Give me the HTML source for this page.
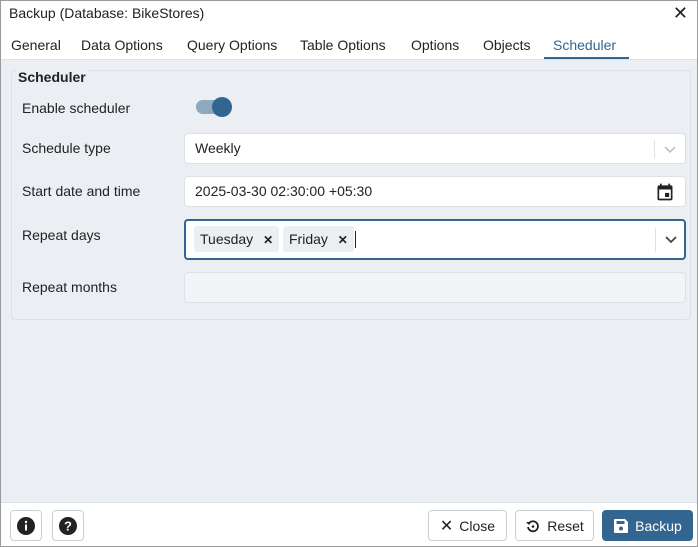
<!DOCTYPE html>
<html><head><style>
*{box-sizing:border-box;margin:0;padding:0}
body{width:698px;height:547px;font-family:"Liberation Sans",sans-serif;font-size:14px;color:#222;background:#fff;position:relative;overflow:hidden}
.frame{position:absolute;inset:0;border:1px solid #9a9a9a}
.abs{position:absolute}
.title{left:9px;top:5px;font-size:14px;color:#222}
.tabs{left:1px;top:29px;width:696px;height:31px;background:#fff;border-bottom:1px solid #dde0e6}
.tab{position:absolute;top:8px;font-size:14px;color:#222}
.content{left:1px;top:60px;width:696px;height:442px;background:#ebeef3}
.fs{left:11px;top:70px;width:680px;height:250px;border:1px solid #dde1e7;border-radius:4px}
.lbl{position:absolute;left:22px;font-size:14px;color:#222}
.inp{position:absolute;left:184px;width:502px;background:#fff;border:1px solid #dde1e7;border-radius:4px}
.foot{left:1px;top:502px;width:696px;height:44px;background:#fff;border-top:1px solid #dde0e6}
.btn{position:absolute;top:510px;height:31px;border:1px solid #ccd0d6;border-radius:4px;background:#fff;font-size:14px;display:flex;align-items:center;justify-content:center;gap:6px;color:#222}
.chip{position:absolute;top:5px;height:26px;background:#ebeef3;border-radius:3px;font-size:14px;padding:5px 6px;color:#222}
</style></head><body>
<div class="abs title">Backup (Database: BikeStores)</div>
<div class="abs" style="right:10px;top:3px;font-size:18px">✕</div>
<div class="abs tabs">
<span class="tab" style="left:10px">General</span>
<span class="tab" style="left:80px">Data Options</span>
<span class="tab" style="left:186px">Query Options</span>
<span class="tab" style="left:299px">Table Options</span>
<span class="tab" style="left:410px">Options</span>
<span class="tab" style="left:482px">Objects</span>
<span class="tab" style="left:552px;color:#326690">Scheduler</span>
<div class="abs" style="left:543px;top:28px;width:85px;height:2px;background:#326690"></div>
</div>
<div class="abs content"></div>
<div class="abs fs"></div>
<div class="abs" style="left:16px;top:69px;font-weight:bold;font-size:14px;background:#ebeef3;padding:0 2px">Scheduler</div>
<div class="lbl" style="top:100px">Enable scheduler</div>
<div class="abs" style="left:196px;top:100px;width:34px;height:14px;border-radius:7px;background:#8da8bf"></div>
<div class="abs" style="left:212px;top:97px;width:20px;height:20px;border-radius:50%;background:#326690"></div>
<div class="lbl" style="top:140px">Schedule type</div>
<div class="inp" style="top:133px;height:31px"><span class="abs" style="left:10px;top:6px">Weekly</span>
<div class="abs" style="right:30px;top:6px;width:1px;height:18px;background:#dde1e7"></div>
<svg class="abs" style="right:8px;top:10px" width="14" height="10"><path d="M2 3l5 5 5-5" stroke="#bbb" fill="none" stroke-width="1.5"/></svg></div>
<div class="lbl" style="top:183px">Start date and time</div>
<div class="inp" style="top:176px;height:31px"><span class="abs" style="left:10px;top:6px">2025-03-30 02:30:00 +05:30</span>
<svg class="abs" style="right:10px;top:5px" width="20" height="20" viewBox="0 0 24 24"><path d="M19 4h-1V2h-2v2H8V2H6v2H5a2 2 0 0 0-2 2v14a2 2 0 0 0 2 2h14a2 2 0 0 0 2-2V6a2 2 0 0 0-2-2zm0 16H5V9h14zm-7-7h5v5h-5z" fill="#222"/></svg></div>
<div class="lbl" style="top:227px">Repeat days</div>
<div class="inp" style="top:219px;height:41px;border:2px solid #326690;left:184px">
<div class="chip" style="left:8px">Tuesday <b style="margin-left:6px;font-size:12px">✕</b></div>
<div class="chip" style="left:97px">Friday <b style="margin-left:6px;font-size:12px">✕</b></div>
<div class="abs" style="left:169px;top:10px;width:1px;height:17px;background:#222"></div>
<div class="abs" style="right:28px;top:7px;width:1px;height:24px;background:#dde1e7"></div>
<svg class="abs" style="right:6px;top:14px" width="14" height="10"><path d="M2 2l5 5 5-5" stroke="#444" fill="none" stroke-width="1.8"/></svg></div>
<div class="lbl" style="top:279px">Repeat months</div>
<div class="inp" style="top:272px;height:31px;background:#f3f4f7"></div>
<div class="abs foot"></div>
<div class="btn" style="left:10px;width:32px"><svg width="20" height="20" viewBox="0 0 20 20"><circle cx="10" cy="10" r="9" fill="#222"/><rect x="9" y="8.5" width="2" height="6" fill="#fff"/><circle cx="10" cy="6" r="1.2" fill="#fff"/></svg></div>
<div class="btn" style="left:52px;width:32px"><svg width="20" height="20" viewBox="0 0 20 20"><circle cx="10" cy="10" r="9" fill="#222"/><text x="10" y="14.5" font-size="13" font-weight="bold" fill="#fff" text-anchor="middle" font-family="Liberation Sans">?</text></svg></div>
<div class="btn" style="left:428px;width:79px"><span style="font-size:16px">✕</span>Close</div>
<div class="btn" style="left:515px;width:79px"><svg width="16" height="16" viewBox="0 0 16 16"><path d="M3.5 6A5 5 0 1 1 3 9" stroke="#222" stroke-width="1.8" fill="none"/><path d="M1 4l3 3 2-3z" fill="#222"/><circle cx="8" cy="8.5" r="1.3" fill="#222"/></svg>Reset</div>
<div class="btn" style="left:602px;width:91px;background:#326690;border-color:#326690;color:#fff"><svg width="16" height="16" viewBox="0 0 16 16"><path d="M2 1h10l3 3v10a1 1 0 0 1-1 1H2a1 1 0 0 1-1-1V2a1 1 0 0 1 1-1z" fill="#fff"/><rect x="3.5" y="3" width="8" height="3" fill="#326690"/><circle cx="8" cy="10.5" r="2" fill="#326690"/></svg>Backup</div>
<div class="frame"></div>
</body></html>
